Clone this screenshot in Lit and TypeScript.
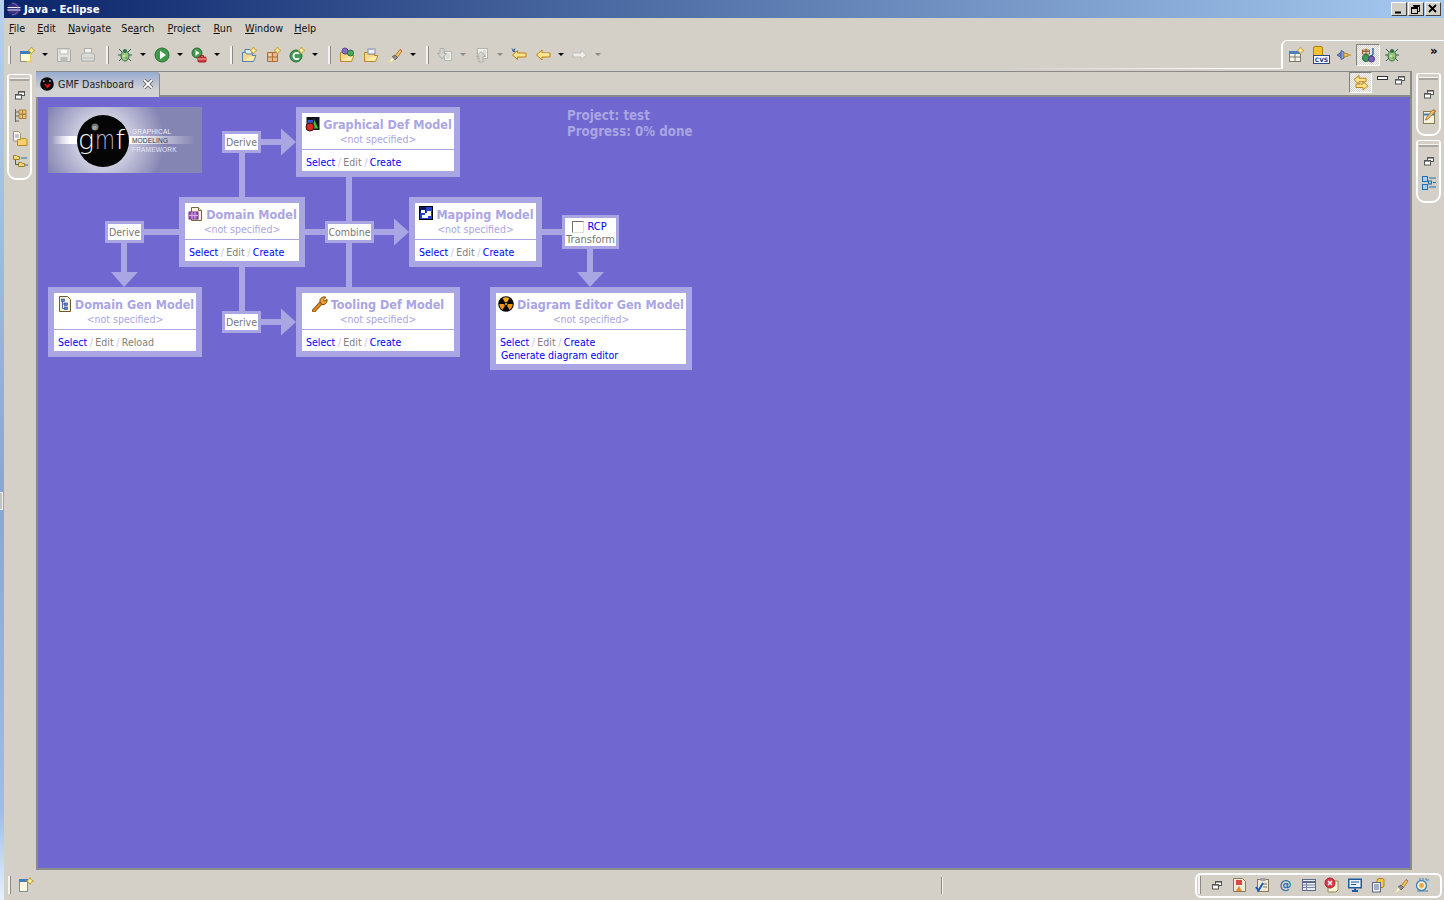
import { LitElement, html, css, svg } from "lit";
import { customElement, property } from "lit/decorators.js";

const spark = (x: number, y: number) => svg`<path d="M${x} ${y - 3.5}L${x + 1.2} ${y - 1.2}L${x + 3.5} ${y}L${x + 1.2} ${y + 1.2}L${x} ${y + 3.5}L${x - 1.2} ${y + 1.2}L${x - 3.5} ${y}L${x - 1.2} ${y - 1.2}Z" fill="#fff3a8" stroke="#c8962a" stroke-width=".9"/>`;
const bugShape = svg`<g stroke="#2f5f4f" stroke-width="1" fill="none"><path d="M2 2l3 3M14 2l-3 3M1 8h3M15 8h-3M2 14l3-3M14 14l-3-3"/></g><ellipse cx="8" cy="9" rx="4" ry="5" fill="#9cc77a" stroke="#2f6d4d"/><circle cx="8" cy="4" r="2" fill="#2f6d4d"/><circle cx="7" cy="9" r="1" fill="#d7ebb0"/><circle cx="9.5" cy="11" r="1" fill="#5f9a4e"/>`;
const restore = svg`<rect x="6.5" y="4.5" width="6" height="4" fill="#fff" stroke="#555"/><rect x="6" y="4" width="7" height="1.6" fill="#555"/><rect x="3.5" y="7.5" width="6" height="4.5" fill="#fff" stroke="#555"/><rect x="3" y="7" width="7" height="1.6" fill="#555"/>`;
const folder = (o = "#b98a2e") => svg`<path d="M1.5 5.5V14.5H12.5L15 8.5H4L1.5 14.5" fill="#fde9a8" stroke="${o}"/><path d="M1.5 14V5.5h3l1 1.5h6v1.5" fill="#f7d88a" stroke="${o}"/>`;

const ICONS: Record<string, unknown> = {
  restore,
  newWin: svg`<rect x="1.5" y="4.5" width="10" height="10" fill="#fdf8d8" stroke="#8d8f88"/><rect x="1" y="4" width="11" height="3" fill="#3f7cbd"/><path d="M11.5 6v8.5h-4" fill="none" stroke="#e8c84a" stroke-width="1.2"/>${spark(12.5, 3.5)}`,
  save: svg`<path d="M1.5 1.5h12l1 1v12h-13z" fill="#e4e2dc" stroke="#a9a9a5"/><rect x="4" y="2" width="8" height="5" fill="#f8f8f6" stroke="#bbb"/><rect x="4.5" y="10" width="7" height="4.5" fill="#bdbdb8"/>`,
  print: svg`<rect x="4.5" y="1.5" width="7" height="6" fill="#f2f2f0" stroke="#adadaa"/><path d="M1.5 8l2-2h9l2 2v6h-13z" fill="#dcdcd8" stroke="#a9a9a6"/><path d="M3 11h10" stroke="#b8b8b4"/>`,
  bug: bugShape,
  run: svg`<circle cx="8" cy="8" r="7" fill="#3f9a4a" stroke="#2b6d38"/><path d="M6 3.8L12 8L6 12.2Z" fill="#fff"/>`,
  ext: svg`<circle cx="6" cy="6" r="5" fill="#3f9a4a" stroke="#2b6d38"/><path d="M4.5 3L8.5 6L4.5 9Z" fill="#fff"/><rect x="7" y="10" width="8" height="5" rx="1" fill="#d43a3a" stroke="#9a2222"/><path d="M9.5 10V8.5h3V10" fill="none" stroke="#9a2222"/><path d="M7 12h8" stroke="#f4b0a0"/>`,
  openType: svg`<path d="M4 2.5h5l2 2V10H4z" fill="#dfeaf8" stroke="#4a7ab0"/>${folder("#5a7fb0")}${spark(12.5, 3.5)}`,
  newPkg: svg`<path d="M2.5 5.5h10v9h-10z" fill="#e8b98a" stroke="#a8703c"/><path d="M7.5 5.5v9M2.5 10h10" stroke="#a8703c"/><rect x="4" y="7" width="2" height="2" fill="#f6d9b6"/>${spark(12.5, 3.5)}`,
  newClass: svg`<circle cx="7" cy="9" r="6" fill="#3d9a52" stroke="#26703a"/><path d="M10 6.8A3.2 3.2 0 1 0 10 11.2" fill="none" stroke="#fff" stroke-width="1.8"/>${spark(12.5, 3.5)}`,
  openProj: svg`${folder()}<circle cx="6" cy="4" r="3" fill="#8a6cc0" stroke="#584a94"/><circle cx="11.5" cy="6" r="3" fill="#4caa60" stroke="#2c7040"/>`,
  openTask: svg`${folder()}<rect x="5" y="2" width="7" height="5" fill="#eef2f8" stroke="#8890a8"/><rect x="6.5" y="1" width="4" height="2" fill="#a8b0c8"/>`,
  brush: svg`<path d="M8 9L13 2.5L15 4L10 11Z" fill="#f1c062" stroke="#b4822e"/><path d="M13 2.5L15 4" stroke="#d85a4a"/><path d="M8 8L10.5 10.5L8 13L5 10Z" fill="#8a8a94" stroke="#666"/><path d="M5 10.5L7 12.5L4 15H1.5L3 14Z" fill="#fff" stroke="#e8d890"/>`,
  nextAnn: svg`<rect x="7.5" y="4.5" width="7" height="9" fill="#f0f0ec" stroke="#b3b3ae"/><path d="M9 7h4M9 9h4M9 11h4" stroke="#c8c8c4"/><path d="M3 1.5h4v5h2.5L5 12L.5 6.5H3z" fill="#d6d4cc" stroke="#aeaeaa"/>`,
  prevAnn: svg`<rect x="3.5" y="1.5" width="10" height="10" fill="#f0f0ec" stroke="#b3b3ae"/><path d="M9 4h3M9 6h3M9 8h3" stroke="#c0c0bc"/><path d="M5 15V9.5H2.5L7 4.5l4.5 5H9V15z" fill="#d6d4cc" stroke="#aeaeaa"/>`,
  lastEdit: svg`<path d="M6.5 3.5V6H15V10H6.5v2.5L1.5 8z" fill="#fce48a" stroke="#c07f14"/><path d="M1 3l3 2M4 1.5L2 5M1 1.5l3 3" stroke="#2a5a96"/>`,
  back: svg`<path d="M7 3V6H15V10H7v3L1.5 8z" fill="#fce48a" stroke="#c07f14"/><path d="M7 7h7" stroke="#fff6c8"/>`,
  fwd: svg`<path d="M9 3V6H1V10H9v3L14.5 8z" fill="#eeece6" stroke="#bdbdb8"/>`,
  openPersp: svg`<rect x="1.5" y="4.5" width="11" height="10" fill="#f8f4e4" stroke="#777"/><rect x="1" y="4" width="12" height="3" fill="#4a80bc"/><path d="M7 7v7M2 10h10" stroke="#777"/>${spark(12.5, 3.5)}`,
  persPlug: svg`<path d="M1 8l4-2.5v5z" fill="#6f8fd0" stroke="#4a62a4"/><path d="M5 3.5l3 1.5v6l-3 1.5z" fill="#8aa2dc" stroke="#4a62a4"/><path d="M8 6l4 1v2l-4 1z" fill="#f0cc60" stroke="#b4861e"/><path d="M12 8h3" stroke="#b4861e"/>`,
  java: svg`<path d="M2 4.5h8M6 1.5v6M2.5 3h7v4h-7z" fill="none" stroke="#a05a2a"/><path d="M13 1v6a2 2 0 0 1-3 1.5" fill="none" stroke="#2a5ea8" stroke-width="1.4"/><circle cx="6" cy="11" r="3.6" fill="#3c9a5a" stroke="#256a3a"/><circle cx="11.5" cy="12" r="3" fill="#7a62b8" stroke="#4a3a8a"/>`,
  sync: svg`<path d="M6 .8V3.5H13V7H6v2.7L1 5z" fill="#fce48a" stroke="#c07f14" transform="translate(0 -.3)"/><path d="M10 6.5V9H3v3.5h7V15l5-4.2z" fill="#fce48a" stroke="#c07f14"/>`,
  hier: svg`<path d="M3.5 1v13M3.5 4H7M3.5 8H7M3.5 13H7" stroke="#666" fill="none"/><path d="M7 2h7v4H7zM7 6.5h7v4H7z" fill="#e8c47a" stroke="#a8803a"/><path d="M10.5 2v9" stroke="#a8803a"/>`,
  pkg: svg`<path d="M1.5 .5h5l2 2V10h-7z" fill="#fff" stroke="#a8905a"/><path d="M3 4h4M3 6h4" stroke="#8a8a8a"/><path d="M5.5 14.5V8.5h3l1-1h4l1.5 1v6z" fill="#f8cf68" stroke="#b48a24"/>`,
  outlineTree: svg`<path d="M1.5 2.5h3l1 1h2v3h-6z" fill="#f6d678" stroke="#a08024"/><path d="M6.5 9.5h3l1 1h2v3h-6z" fill="#f6d678" stroke="#a08024"/><path d="M3.5 7v4.5h3" stroke="#555" fill="none"/><path d="M9 5h6M13 12h3" stroke="#2a6ea8"/>`,
  task: svg`<rect x="2.5" y="2.5" width="11" height="12" fill="#f6f0de" stroke="#8a7a4a"/><path d="M2.5 5.5h11" stroke="#3e80bc" stroke-width="2"/><path d="M11 1.5l2.5-.8 1.2 1.2L7 10l-2.5 1 1-2.5z" fill="#f0c06a" stroke="#8a5a2a" stroke-width=".7"/><path d="M12.5 1l2 2" stroke="#d8584a"/>`,
  list: svg`<rect x="1.5" y="1.5" width="5" height="5" fill="#a4d0f2" stroke="#1e6eb0"/><rect x="1.5" y="9.5" width="5" height="5" fill="#a4d0f2" stroke="#1e6eb0"/><rect x="7.5" y="6" width="3" height="3" fill="#a4d0f2" stroke="#1e6eb0"/><path d="M8 3h7M12 7.5h3M8 12h7" stroke="#1e6eb0"/>`,
  windowNew: svg`<rect x="1.5" y="2.5" width="8" height="12" fill="#fff8e0" stroke="#7f8f90"/><rect x="1" y="2" width="9" height="3" fill="#3e7fbc"/>${spark(12, 4)}`,
  prob: svg`<path d="M1.5 1.5h9l3 3v10h-12z" fill="#f0e8da" stroke="#8a7a5a"/><rect x="4" y="3" width="6" height="5" fill="#d8484a"/><path d="M7 9l3 5H4z" fill="#e88a2a"/>`,
  check: svg`<rect x="2.5" y="2.5" width="11" height="12" fill="#efe8d4" stroke="#8a7a5a"/><rect x="5.5" y="1" width="5" height="3" fill="#9aa4b8"/><path d="M7 7h5M8 10h4" stroke="#777"/><path d="M1 10l2.5 3.5L8 6" fill="none" stroke="#1c5cb0" stroke-width="2"/>`,
  table: svg`<rect x="1.5" y="2.5" width="13" height="11" fill="#e8edf4" stroke="#5e6a8a"/><path d="M1.5 5h13" stroke="#5e6a8a" stroke-width="2"/><path d="M5.5 6v7M2 8h12M2 10.5h12" stroke="#7a86a6"/>`,
  err: svg`<path d="M4 4h10v9l-2 2H4z" fill="#f8f2d4" stroke="#9a8a5a"/><circle cx="6" cy="6" r="5" fill="#d8384a" stroke="#a82030"/><path d="M4 4l4 4M8 4l-4 4" stroke="#fff" stroke-width="1.5"/>`,
  console: svg`<rect x="1" y="1.5" width="14" height="10" fill="#1e5aa0"/><rect x="2.5" y="3" width="11" height="7" fill="#eaf2fa"/><path d="M4 5h8M4 7.5h5" stroke="#1e5aa0"/><path d="M5 14h6M8 11.5V14" stroke="#1e5aa0" stroke-width="2"/>`,
  db: svg`<rect x="7" y="1.5" width="7" height="9" rx="2" fill="#f4c84a" stroke="#a8821e"/><rect x="2.5" y="5.5" width="8" height="9.5" fill="#eef2f6" stroke="#5a6a86"/><path d="M4 8h5M4 10h5M4 12h5" stroke="#5a6a86"/>`,
  prog: svg`<g transform="translate(-2 0)"><circle cx="7.5" cy="8.5" r="5" fill="#fbeec8" stroke="#3a84b8" stroke-width="1.3"/><circle cx="7.5" cy="8.5" r="2.4" fill="#eaa84a"/><path d="M6 3V1M9 3V1M12 3V1M3 14h11" stroke="#3a84b8"/><path d="M12 3h3" stroke="#3a84b8"/></g>`,
  dash: svg`<circle cx="8" cy="8" r="6.8" fill="#0a0a0a"/><circle cx="4.8" cy="5.2" r="1" fill="#9a9a9a"/><circle cx="11" cy="5" r="1" fill="#9a9a9a"/><path d="M5 8h2.2l.8 1.4L10 7.5l1.5 1L8.5 12.5z" fill="#e01010"/>`,
  graphM: svg`<g transform="translate(1 0)"><rect x="1.5" y="1" width="13" height="13" fill="#101020"/><rect x="2.5" y="4" width="6" height="8" fill="#3058c8"/><path d="M9 2l5 11H7z" fill="#48b838" stroke="#102010"/><circle cx="5" cy="11" r="4" fill="#d82820" stroke="#401010"/></g>`,
  domainM: svg`<g transform="translate(1 0)"><path d="M3.5 1.5h7l3 3v10h-10z" fill="#f8f0d8" stroke="#77663a"/><path d="M10.5 1.5v3h3" fill="#fff" stroke="#77663a"/><rect x="1" y="6" width="9" height="7" fill="#9a52b8" stroke="#6a2e8a"/><path d="M4 6v7M7 6v7M1 9.5h9" stroke="#d8b0e4"/></g>`,
  genM: svg`<g transform="translate(1 0)"><path d="M2.5 .5h8l3 3v12h-11z" fill="#f6f0dc" stroke="#6e5a2e"/><rect x="4.5" y="3" width="3" height="2.5" fill="#5a86c8" stroke="#1e4a98" stroke-width=".6"/><rect x="7.5" y="7" width="3" height="2.5" fill="#5a86c8" stroke="#1e4a98" stroke-width=".6"/><rect x="7.5" y="11" width="3" height="2.5" fill="#5a86c8" stroke="#1e4a98" stroke-width=".6"/><path d="M5.5 5.5V12.5H7.5M5.5 8H7.5" stroke="#1e4a98" fill="none" stroke-width=".8"/></g>`,
  mapM: svg`<g transform="translate(2 0)"><rect x=".5" y=".5" width="13" height="13" fill="#2444d0" stroke="#000" stroke-width="1"/><rect x="1" y="1" width="6" height="6" fill="#101a60"/><path d="M2 4h4v3h2V5h4v5H9v2H3V9h3V7H2z" fill="#fff"/><rect x="8" y="2" width="4" height="3" fill="#2444d0"/></g>`,
  wrench: svg`<path d="M2 14.5L9.5 6.5" stroke="#7a4a10" stroke-width="4" stroke-linecap="round"/><path d="M2 14.5L9.5 6.5" stroke="#e88a1c" stroke-width="2.2" stroke-linecap="round"/><path d="M8 6a4.2 4.2 0 0 1 6-4.7l-2.4 2.4 1 1.4 2.4-1.8A4.2 4.2 0 0 1 10 8.5z" fill="#f0a030" stroke="#7a4a10"/>`,
  rad: svg`<circle cx="8" cy="8" r="7.8" fill="#080808"/><path d="M8 8L4.6 2.2A6.7 6.7 0 0 1 11.4 2.2Z" fill="#f8b018"/><path d="M8 8H14.7A6.7 6.7 0 0 1 11.4 13.8Z" fill="#f09010"/><path d="M8 8H1.3A6.7 6.7 0 0 0 4.6 13.8Z" fill="#f09010"/><circle cx="8" cy="8" r="1.9" fill="#080808"/><circle cx="8" cy="8" r="1" fill="#f8c020"/>`,
};

const icon = (name: string) => html`<svg class="ic" viewBox="0 0 16 16" width="16" height="16" aria-hidden="true">${ICONS[name]}</svg>`;
const C = "#aaa5e3";

type Tb = { k: "i" | "d" | "dd" | "s"; n?: string };
const i = (n: string): Tb => ({ k: "i", n });
const D: Tb = { k: "d" }, G: Tb = { k: "dd" }, S: Tb = { k: "s" };
const TOOL: Tb[] = [S, i("newWin"), D, i("save"), i("print"), S, i("bug"), D, i("run"), D, i("ext"), D, S,
  i("openType"), i("newPkg"), i("newClass"), D, S, i("openProj"), i("openTask"), i("brush"), D, S,
  i("nextAnn"), G, i("prevAnn"), G, i("lastEdit"), i("back"), D, i("fwd"), G];

@customElement("gmf-node")
class GmfNode extends LitElement {
  @property() label = "";
  @property() ic = "";
  @property() last = "Create";
  @property({ type: Boolean }) gen = false;
  static styles = css`
    :host { display: block; position: absolute; box-sizing: border-box; border: 6px solid #aaa5e3; background: #fff;
      font-family: "DejaVu Sans", sans-serif; font-stretch: condensed; font-size: 10.5px; line-height: 13px; }
    .head { height: 37px; box-sizing: border-box; border-bottom: 1px solid #aaa5e3; display: flex; flex-direction: column; align-items: center; }
    .title { display: flex; align-items: center; gap: 3px; height: 20px; padding-top: 2px; box-sizing: border-box; white-space: nowrap; font-weight: bold; font-size: 12.5px; color: #aaa5e3; }
    .sub { color: #aaa5e3; height: 14px; line-height: 12px; }
    .links { padding: 6px 0 0 4px; white-space: nowrap; color: #808080; }
    .l { color: #0000ff; }
    .sl { color: #c8c4ee; margin: 0 2.5px; }
    .g { padding-left: 1px; }
    svg { display: block; flex: none; }
  `;
  render() {
    return html`<div class="head"><div class="title">${icon(this.ic)}<span>${this.label}</span></div><div class="sub">&lt;not specified&gt;</div></div>
      <div class="links"><span class="l">Select</span><span class="sl">/</span>Edit<span class="sl">/</span>${this.last === "Reload" ? html`Reload` : html`<span class="l">Create</span>`}
      ${this.gen ? html`<div class="g l">Generate diagram editor</div>` : ""}</div>`;
  }
}

@customElement("app-root")
class AppRoot extends LitElement {
  static styles = css`
    :host { display: block; width: 1444px; height: 900px; overflow: hidden; }
    .app { display: flex; width: 1444px; height: 900px; background: #d4d0c8; color: #000;
      font-family: "DejaVu Sans", sans-serif; font-stretch: condensed; font-size: 11px; }
    .strip { width: 4px; flex: none; position: relative; background: linear-gradient(#b8cfee, #86a6d6 55%, #9cbcea 90%, #e8f0fa); }
    .grip { position: absolute; left: 0; top: 492px; width: 3px; height: 18px; box-sizing: border-box; background: #c4c2c0; border: 1px solid #f0f0f0; border-left: 0; }
    .win { flex: 1; min-width: 0; display: flex; flex-direction: column; }
    svg { display: block; flex: none; }
    .title { height: 18px; flex: none; display: flex; align-items: center; background: linear-gradient(90deg, #0a246a, #a6caf0); color: #fff; font-weight: bold; font-size: 11.3px; padding-left: 3px; gap: 3px; }
    .title .sp { flex: 1; }
    .wb { display: flex; gap: 1px; padding-right: 3px; }
    .wbtn { width: 16px; height: 14px; box-sizing: border-box; background: #d4d0c8; border: 1px solid; border-color: #fff #404040 #404040 #fff; display: flex; align-items: center; justify-content: center; }
    .menu { height: 22px; box-sizing: border-box; padding: 0 0 2px 5px; flex: none; display: flex; align-items: center; gap: 12px; color: #111; font-size: 10.75px; }
    .menu span:nth-child(4) { margin-left: -2px; }
    .menu span:nth-child(5), .menu span:nth-child(6), .menu span:nth-child(7) { margin-left: 1px; }
    .menu span:nth-child(8) { margin-left: -1px; }
    .menu u { text-underline-offset: 1px; }
    .tools { height: 31px; flex: none; display: flex; position: relative; }
    .tl { flex: 1; display: flex; align-items: center; height: 29px; }
    .tl .it { width: 24px; display: flex; justify-content: center; }
    .dd { width: 13px; padding-right: 1px; box-sizing: border-box; display: flex; justify-content: center; }
    .dd i { border: 3px solid transparent; border-top: 3px solid #000; border-bottom: 0; width: 0; height: 0; display: block; }
    .dd.g i { border-top-color: #8a8a8a; }
    .sep { width: 3px; height: 18px; margin: 0 4px 0 6px; background: linear-gradient(90deg, #f4f3f0 0 2px, #8c8a84 2px); flex: none; }
    .tl .sep:first-child { margin-left: 4px; }
    .persp { width: 163px; height: 29px; box-sizing: border-box; flex: none; border: 1px solid #fff; border-width: 1px 0 0 2px; border-top-left-radius: 6px; display: flex; align-items: center; padding-left: 1px; }
    .fade { position: absolute; left: 0; width: 1277px; top: 28px; height: 1px; background: linear-gradient(90deg, transparent 78%, #fff 96%); }
    .persp .b { width: 24px; height: 22px; display: flex; align-items: center; justify-content: center; box-sizing: border-box; }
    .hatch { background: repeating-conic-gradient(#d4d0c8 0 25%, #fff 0 50%) 0 0 / 2px 2px; border: 1px solid; border-color: #808080 #fff #fff #808080; }
    .mm { margin: 0 0 8px 26px; font-weight: bold; font-size: 13px; line-height: 14px; }
    .cvs { position: relative; width: 16px; height: 16px; }
    .cvs b { position: absolute; left: 1px; top: 8px; width: 15px; height: 7px; background: #fff; border: 1px solid #2a4a86; box-sizing: content-box; color: #1a3a86; font: bold 6px/7px "DejaVu Sans", sans-serif; text-align: center; }
    .cvs s { position: absolute; left: 1px; top: -1px; width: 8px; height: 10px; background: #f2c22e; border-radius: 2px; border: 1px solid #a8821e; }
    .body { flex: 1; min-height: 0; display: flex; }
    .side { width: 32px; flex: none; display: flex; flex-direction: column; gap: 4px; padding-top: 2px; box-sizing: border-box; }
    .side.l { padding-left: 3px; padding-top: 3px; }
    .side.r { padding-left: 4px; }
    .trim { width: 25px; box-sizing: border-box; border: 2px solid #fff; border-top-width: 1px; border-radius: 3px 3px 9px 9px; display: flex; flex-direction: column; align-items: center; }
    .h { width: 19px; height: 3px; margin: 3px 0 6px; background: linear-gradient(#f4f3f0 0 1px, #a8a69f 1px); flex: none; }
    .g5 { margin-top: 5px; } .g6 { margin-top: 6px; } .g7 { margin-top: 7px; }
    .s63 { height: 63px; } .s106 { height: 106px; }
    .ed { flex: 1; min-width: 0; display: flex; flex-direction: column; box-sizing: border-box; border: 2px solid #8a8a86; border-width: 1px 2px 2px 2px; }
    .tabs { height: 25px; flex: none; display: flex; box-sizing: border-box; border-bottom: 2px solid #8a8a86; position: relative; }
    .tab { margin-left: -2px; width: 124px; height: 25px; flex: none; box-sizing: border-box; display: flex; align-items: center; gap: 3px; padding: 0 0 2px 3px; background: linear-gradient(#97aad0, #d0d2d4 70%); border-right: 1px solid #8a8a86; border-radius: 0 4px 0 0; color: #222; white-space: nowrap; font-size: 10.6px; }
    .x { margin-left: 5px; }
    .tr { margin-left: auto; display: flex; align-items: flex-start; height: 23px; }
    .tr .b { width: 23px; height: 21px; display: flex; align-items: center; justify-content: center; box-sizing: border-box; margin-right: 2px; }
    .tb { width: 17px; display: flex; justify-content: center; }
    .tb.m { margin-top: 2px; }
    .end { width: 2px; }
    .canvas { flex: 1; background: #7068d0; position: relative; overflow: hidden; }
    .lines { position: absolute; left: 0; top: 0; }
    .lab { position: absolute; box-sizing: border-box; border: 3px solid #aaa5e3; background: #fff; color: #777; line-height: 16px; text-align: center; white-space: nowrap; font-size: 10.5px; }
    .lab.rc { padding-top: 2px; font-size: 11px; }
    .lab .rcp { display: flex; align-items: center; justify-content: center; gap: 3px; color: #0000ff; line-height: 13px; padding-right: 2px; }
    .lab .tf { line-height: 13px; }
    .cb { width: 12px; height: 12px; box-sizing: border-box; border: 1px solid; border-color: #707070 #ddd #ddd #707070; background: #fff; }
    .logo { position: absolute; left: 10px; top: 10px; }
    .proj { position: absolute; left: 529px; top: 11px; color: #aaa5e3; font-weight: bold; font-size: 13.2px; line-height: 16px; white-space: nowrap; }
    .status { height: 30px; flex: none; display: flex; align-items: center; position: relative; }
    .status > .sep { margin: 0 0 0 4px; height: 18px; }
    .status .wn { margin-left: 7px; }
    .status .sep2 { margin-left: 907px; width: 1px; height: 17px; background: #8c8a84; box-shadow: 1px 0 0 #f4f3f0; }
    .fast { margin-left: 253px; width: 247px; height: 25px; box-sizing: border-box; border: 2px solid #fff; border-radius: 6px; display: flex; align-items: center; padding-left: 1px; flex: none; }
    .fast .sep { margin: 0 4px 0 0; }
    .fast .it { width: 23px; display: flex; justify-content: center; flex: none; }
    .at { color: #2f74ad; font: bold 12px/16px "DejaVu Sans", sans-serif; }
    .gmf { font-family: "DejaVu Sans", sans-serif; font-weight: 200; font-stretch: normal; }
    .lg { font-family: "Liberation Sans", sans-serif; font-size: 6.5px; letter-spacing: .2px; }
  `;

  nodes = [
    { l: "Graphical Def Model", i: "graphM", x: 296, y: 107, w: 164, h: 70 },
    { l: "Domain Model", i: "domainM", x: 179, y: 197, w: 126, h: 70 },
    { l: "Mapping Model", i: "mapM", x: 409, y: 197, w: 133, h: 70 },
    { l: "Domain Gen Model", i: "genM", x: 48, y: 287, w: 154, h: 70, last: "Reload" },
    { l: "Tooling Def Model", i: "wrench", x: 296, y: 287, w: 164, h: 70 },
    { l: "Diagram Editor Gen Model", i: "rad", x: 490, y: 287, w: 202, h: 83, gen: true },
  ];
  labels = [
    { t: "Derive", x: 222, y: 131, w: 39, h: 22 },
    { t: "Derive", x: 105, y: 221, w: 39, h: 22 },
    { t: "Combine", x: 325, y: 221, w: 49, h: 22 },
    { t: "Derive", x: 222, y: 311, w: 39, h: 22 },
  ];
  rects = [
    [239, 153, 6, 44], [261, 139, 20, 6], [144, 229, 35, 6], [121, 243, 6, 29], [346, 177, 6, 110],
    [305, 229, 20, 6], [374, 229, 20, 6], [542, 229, 20, 6], [587, 249, 6, 23], [239, 267, 6, 44], [261, 319, 20, 6],
  ];
  arrows = ["281,128.5 296,142 281,155.5", "394,218.5 409,232 394,245.5", "281,308.5 296,322 281,335.5", "111,272 124,287 138,272", "577,272 590,287 604,272"];

  logo() {
    return html`<svg class="logo" width="154" height="66" viewBox="48 107 154 66">
      <defs>
        <radialGradient id="gl" gradientUnits="userSpaceOnUse" cx="103" cy="141" r="62"><stop offset=".4" stop-color="#fff" stop-opacity=".6"/><stop offset="1" stop-color="#fff" stop-opacity="0"/></radialGradient>
        <linearGradient id="bl" x1="0" x2="1"><stop offset="0" stop-color="#fff" stop-opacity="0"/><stop offset=".6" stop-color="#fff"/></linearGradient>
        <linearGradient id="br" x1="0" x2="1"><stop offset="0" stop-color="#fff"/><stop offset="1" stop-color="#fff" stop-opacity="0"/></linearGradient>
      </defs>
      <rect x="48" y="107" width="154" height="66" fill="#8585b4"/>
      <rect x="48" y="107" width="154" height="66" fill="url(#gl)"/>
      <rect x="52" y="136" width="30" height="8" fill="url(#bl)"/>
      <rect x="129" y="136" width="66" height="8" fill="url(#br)"/>
      <circle cx="103" cy="141" r="26" fill="#050505"/>
      <circle cx="95" cy="127" r="3.5" fill="#777"/>
      <text class="gmf" x="92.5" y="129.5" font-size="7" font-weight="bold" fill="#eee">e</text>
      <text class="gmf" x="78" y="149" font-size="27" fill="#fff">g</text>
      <text class="gmf" transform="translate(95 149) scale(.76 1)" font-size="27" fill="#b8b8e8">m</text>
      <text class="gmf" x="115.5" y="149" font-size="27" fill="#fff">f</text>
      <text class="lg" x="132" y="134" fill="#f0f0f8">GRAPHICAL</text>
      <text class="lg" x="132" y="143" fill="#333">MODELING</text>
      <text class="lg" x="132" y="152" fill="#e4e4f4">FRAMEWORK</text>
    </svg>`;
  }

  render() {
    const menu = [["", "F", "ile"], ["", "E", "dit"], ["", "N", "avigate"], ["Se", "a", "rch"], ["", "P", "roject"], ["", "R", "un"], ["", "W", "indow"], ["", "H", "elp"]];
    return html`<div class="app">
      <div class="strip"><div class="grip"></div></div>
      <div class="win">
        <div class="title">
          <svg width="14" height="14" viewBox="0 0 14 14"><circle cx="7" cy="7" r="6.5" fill="#39307e"/><path d="M.5 5.5h13M.5 8h13" stroke="#f0f0ff" stroke-width="1.2"/><path d="M5 1a6 6 0 0 1 0 12" fill="none" stroke="#8a80c8" stroke-width=".7"/></svg>
          <span>Java - Eclipse</span><span class="sp"></span>
          <div class="wb">
            <div class="wbtn"><svg width="10" height="10" viewBox="0 0 10 10"><path d="M1 8.5h6" stroke="#000" stroke-width="2"/></svg></div>
            <div class="wbtn"><svg width="12" height="11" viewBox="0 0 12 11"><path d="M3.5 2.5h6v5h-2M3 1.5h7" fill="none" stroke="#000"/><rect x="1.5" y="4.5" width="6" height="5" fill="none" stroke="#000"/><path d="M1 4h7" stroke="#000" stroke-width="2"/></svg></div>
            <div class="wbtn"><svg width="10" height="10" viewBox="0 0 10 10"><path d="M1 1l7 7M8 1l-7 7" stroke="#000" stroke-width="1.8"/></svg></div>
          </div>
        </div>
        <div class="menu">${menu.map(([a, u, b]) => html`<span>${a}<u>${u}</u>${b}</span>`)}</div>
        <div class="tools">
          <div class="fade"></div>
          <div class="tl">${TOOL.map((t) => t.k === "i" ? html`<div class="it">${icon(t.n!)}</div>` : t.k === "s" ? html`<div class="sep"></div>` : html`<div class="dd ${t.k === "dd" ? "g" : ""}"><i></i></div>`)}</div>
          <div class="persp">
            <div class="b">${icon("openPersp")}</div>
            <div class="b"><div class="cvs"><s></s><b>CVS</b></div></div>
            <div class="b">${icon("persPlug")}</div>
            <div class="b hatch">${icon("java")}</div>
            <div class="b">${icon("bug")}</div>
            <span class="mm">»</span>
          </div>
        </div>
        <div class="body">
          <div class="side l">
            <div class="trim s106">
              <div class="h"></div>
              ${icon("restore")}
              <div class="g5">${icon("hier")}</div>
              <div class="g7">${icon("pkg")}</div>
              <div class="g6">${icon("outlineTree")}</div>
            </div>
          </div>
          <div class="ed">
            <div class="tabs">
              <div class="tab">${icon("dash")}<span>GMF Dashboard</span>
                <svg class="x" width="12" height="12" viewBox="0 0 12 12"><path d="M2 2l8 8M10 2l-8 8" stroke="#555" stroke-width="3.4"/><path d="M2 2l8 8M10 2l-8 8" stroke="#fff" stroke-width="1.8"/></svg>
              </div>
              <div class="tr">
                <div class="b hatch">${icon("sync")}</div>
                <div class="tb m"><svg width="12" height="8" viewBox="0 0 12 8"><rect x=".5" y="2.5" width="10" height="3" fill="#fff" stroke="#333"/></svg></div>
                <div class="tb">${icon("restore")}</div>
                <div class="end"></div>
              </div>
            </div>
            <div class="canvas">
              <svg class="lines" width="700" height="300" viewBox="38 97 700 300">
                ${this.rects.map(([x, y, w, h]) => svg`<rect x=${x} y=${y} width=${w} height=${h} fill=${C}/>`)}
                ${this.arrows.map((p) => svg`<polygon points=${p} fill=${C}/>`)}
              </svg>
              ${this.logo()}
              <div class="proj">Project: test<br>Progress: 0% done</div>
              ${this.nodes.map((n) => html`<gmf-node style="left:${n.x - 38}px;top:${n.y - 97}px;width:${n.w}px;height:${n.h}px" .label=${n.l} .ic=${n.i} .last=${n.last ?? "Create"} .gen=${!!n.gen}></gmf-node>`)}
              ${this.labels.map((l) => html`<div class="lab" style="left:${l.x - 38}px;top:${l.y - 97}px;width:${l.w}px;height:${l.h}px">${l.t}</div>`)}
              <div class="lab rc" style="left:${562 - 38}px;top:${215 - 97}px;width:57px;height:34px"><div class="rcp"><span class="cb"></span>RCP</div><div class="tf">Transform</div></div>
            </div>
          </div>
          <div class="side r">
            <div class="trim s63"><div class="h"></div>${icon("restore")}<div class="g7">${icon("task")}</div></div>
            <div class="trim s63"><div class="h"></div>${icon("restore")}<div class="g6">${icon("list")}</div></div>
          </div>
        </div>
        <div class="status">
          <div class="sep"></div><div class="wn">${icon("windowNew")}</div><div class="sep2"></div>
          <div class="fast"><div class="sep"></div>
            ${["restore", "prob", "check", "@", "table", "err", "console", "db", "brush", "prog"].map((n) => n === "@" ? html`<div class="it at">@</div>` : html`<div class="it">${icon(n)}</div>`)}
          </div>
        </div>
      </div>
    </div>`;
  }
}
